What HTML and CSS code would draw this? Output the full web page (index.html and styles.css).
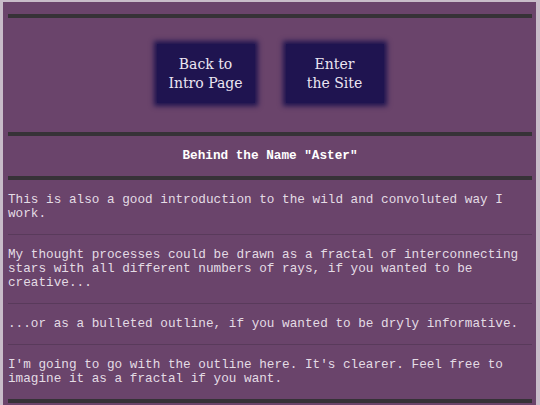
FILE: index.html
```html
<!DOCTYPE html>
<html>
<head>
<meta charset="utf-8">
<link rel="stylesheet" href="styles.css">
</head>
<body>
<div class="page">
  <div class="bar"></div>
  <div class="nav">
    <a class="btn" href="#">Back to<br>Intro Page</a>
    <a class="btn" href="#">Enter<br>the Site</a>
  </div>
  <div class="bar"></div>
  <h1 class="title">Behind the Name "Aster"</h1>
  <div class="bar"></div>
  <p class="para">This is also a good introduction to the wild and convoluted way I work.</p>
  <p class="para">My thought processes could be drawn as a fractal of interconnecting stars with all different numbers of rays, if you wanted to be creative...</p>
  <p class="para">...or as a bulleted outline, if you wanted to be dryly informative.</p>
  <p class="para last">I'm going to go with the outline here. It's clearer. Feel free to imagine it as a fractal if you want.</p>
  <div class="bar"></div>
</div>
</body>
</html>
```

FILE: styles.css
```css
html, body {
  margin: 0;
  padding: 0;
  background: #6a446b;
  overflow: hidden;
}

.page {
  background: #6a446b;
  border-left: 3px solid #c8bcc9;
  border-right: 4px solid #c8bcc9;
  border-top: 2px solid #c8bcc9;
  padding: 12px 4px 40px 5px;
  min-height: 420px;
  font-family: "Liberation Mono", "Courier New", monospace;
  font-size: 12.7px;
  color: #e4dce5;
}

.bar {
  height: 4px;
  background: #363237;
}

.nav {
  display: flex;
  justify-content: center;
  gap: 31px;
  padding: 26px 0 29px;
}

.btn {
  width: 98px;
  height: 59px;
  background: #1f1450;
  box-shadow: 0 0 5px 3px #1f1450;
  display: flex;
  align-items: center;
  justify-content: center;
  text-align: center;
  font-family: "DejaVu Serif", "Liberation Serif", serif;
  font-size: 14px;
  line-height: 19px;
  color: #ece6f2;
  text-decoration: none;
}

.title {
  margin: 0;
  padding: 13px 0;
  text-align: center;
  font-family: "Liberation Mono", "Courier New", monospace;
  font-size: 12.7px;
  line-height: 14px;
  font-weight: bold;
  color: #ffffff;
}

.para {
  margin: 0;
  padding: 13px 0;
  line-height: 14px;
  border-bottom: 1px solid #593a5b;
}

.para.last {
  border-bottom: none;
}
```
